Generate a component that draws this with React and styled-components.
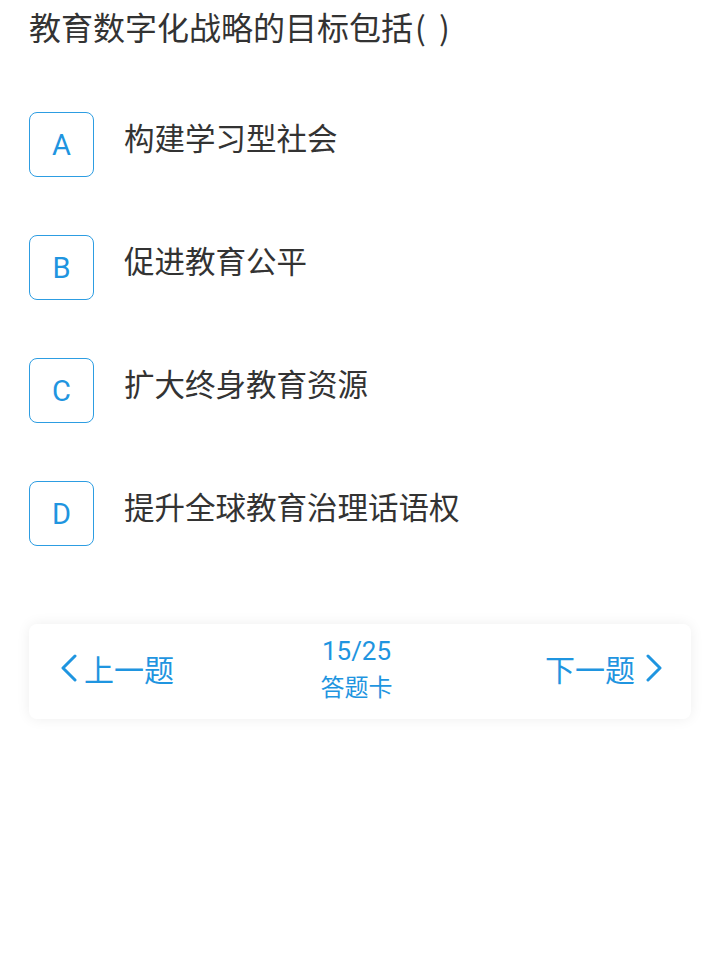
import React from 'react';
import styled, { createGlobalStyle } from 'styled-components';

const GlobalStyle = createGlobalStyle`
  body {
    margin: 0;
    background: #ffffff;
    font-family: "Noto Sans CJK SC", "Noto Sans", sans-serif;
  }
`;

const Page = styled.div`
  width: 720px;
  min-height: 960px;
  box-sizing: border-box;
  padding: 4px 29px 0;
`;

const Question = styled.h1`
  margin: 0;
  font-size: 32px;
  font-weight: 400;
  line-height: 44px;
  color: #333333;
  padding-left: 0;
`;

const Paren = styled.span`
  margin-left: 2px;
  letter-spacing: 3px;
`;

const Options = styled.div`
  display: flex;
  flex-direction: column;
  gap: 58px;
  margin-top: 64px;
`;

const Option = styled.div`
  display: flex;
  align-items: flex-start;
  gap: 30px;
`;

const Letter = styled.div`
  width: 65px;
  height: 65px;
  box-sizing: border-box;
  border: 1.5px solid #2d9de2;
  border-radius: 8px;
  display: flex;
  align-items: center;
  justify-content: center;
  color: #1f95e0;
  font-family: "Roboto", "Noto Sans", sans-serif;
  font-size: 29px;
  flex-shrink: 0;
`;

const OptionText = styled.div`
  font-size: 30.5px;
  line-height: 50px;
  color: #333333;
`;

const NavCard = styled.div`
  margin-top: 78px;
  height: 95px;
  box-sizing: border-box;
  padding: 0 28px 7px 31px;
  border-radius: 8px;
  background: #ffffff;
  box-shadow: 0 0 14px rgba(0, 0, 0, 0.07);
  display: flex;
  align-items: center;
  justify-content: space-between;
  color: #1f95e0;
`;

const NavButton = styled.div`
  display: flex;
  align-items: center;
  gap: ${(p) => p.$gap}px;
  font-size: 30px;
  line-height: 40px;
`;

const Counter = styled.div`
  display: flex;
  flex-direction: column;
  align-items: center;
  margin-right: 6px;
`;

const Count = styled.div`
  font-family: "Roboto", "Noto Sans", sans-serif;
  font-size: 26px;
  line-height: 36px;
`;

const Card = styled.div`
  font-size: 24px;
  line-height: 34px;
`;

const Chevron = ({ dir }) => (
  <svg width="18" height="28" viewBox="0 0 18 28">
    <polyline
      points={dir === 'left' ? '15,2 3,14 15,26' : '3,2 15,14 3,26'}
      fill="none"
      stroke="#1f95e0"
      strokeWidth="3"
      strokeLinecap="round"
      strokeLinejoin="round"
    />
  </svg>
);

const options = [
  { key: 'A', text: '构建学习型社会' },
  { key: 'B', text: '促进教育公平' },
  { key: 'C', text: '扩大终身教育资源' },
  { key: 'D', text: '提升全球教育治理话语权' },
];

const App = () => {
  return (
    <>
      <GlobalStyle />
      <Page>
        <Question>
          教育数字化战略的目标包括<Paren>( )</Paren>
        </Question>
        <Options>
          {options.map((o) => (
            <Option key={o.key}>
              <Letter>{o.key}</Letter>
              <OptionText>{o.text}</OptionText>
            </Option>
          ))}
        </Options>
        <NavCard>
          <NavButton $gap={6}>
            <Chevron dir="left" />
            上一题
          </NavButton>
          <Counter>
            <Count>15/25</Count>
            <Card>答题卡</Card>
          </Counter>
          <NavButton $gap={10}>
            下一题
            <Chevron dir="right" />
          </NavButton>
        </NavCard>
      </Page>
    </>
  );
};

export default App;
